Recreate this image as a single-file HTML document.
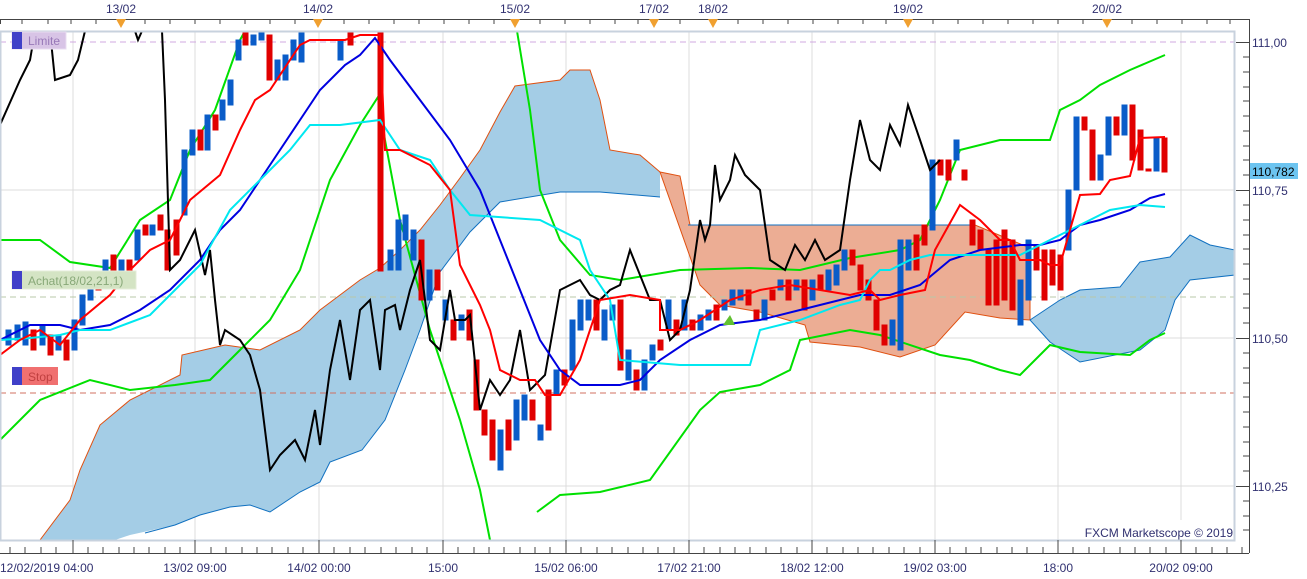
<!DOCTYPE html>
<html><head><meta charset="utf-8"><style>
html,body{margin:0;padding:0;background:#fff;width:1307px;height:579px;overflow:hidden}
svg{display:block;font-family:"Liberation Sans",sans-serif}
</style></head><body>
<svg width="1307" height="579" viewBox="0 0 1307 579" xmlns="http://www.w3.org/2000/svg">
<rect width="1307" height="579" fill="#fff"/>
<!-- grid -->
<g stroke="#dcdcdc" stroke-width="1">
<line x1="73" y1="31" x2="73" y2="540"/><line x1="195" y1="31" x2="195" y2="540"/><line x1="319" y1="31" x2="319" y2="540"/><line x1="443" y1="31" x2="443" y2="540"/><line x1="566" y1="31" x2="566" y2="540"/><line x1="689" y1="31" x2="689" y2="540"/><line x1="812" y1="31" x2="812" y2="540"/><line x1="935" y1="31" x2="935" y2="540"/><line x1="1058" y1="31" x2="1058" y2="540"/><line x1="1181" y1="31" x2="1181" y2="520"/>
<line x1="0" y1="190" x2="1235" y2="190"/><line x1="0" y1="338" x2="1235" y2="338"/><line x1="0" y1="486" x2="1235" y2="486"/>
</g>
<!-- clouds -->
<polygon fill="#a4cde6" points="40,540 70,500 80,470 100,425 130,400 180,375 182,355 225,345 260,350 300,330 320,310 360,280 380,268 400,250 420,230 440,205 460,178 480,150 500,112 515,86 560,80 570,70 590,70 600,100 610,150 640,155 660,172 660,197 600,192 560,192 500,202 470,232 440,272 420,330 405,370 385,420 362,450 330,462 320,482 300,492 270,512 250,505 230,507 200,515 175,525 130,535 115,540"/>
<polyline fill="none" stroke="#e05010" stroke-width="1" points="40,540 70,500 80,470 100,425 130,400 180,375 182,355 225,345 260,350 300,330 320,310 360,280 380,268 400,250 420,230 440,205 460,178 480,150 500,112 515,86 560,80 570,70 590,70 600,100 610,150 640,155 660,172"/>
<polyline fill="none" stroke="#1070c0" stroke-width="1" points="660,197 600,192 560,192 500,202 470,232 440,272 420,330 405,370 385,420 362,450 330,462 320,482 300,492 270,512 250,505 230,507 200,515 175,525 145,533"/>
<polygon fill="#ecad94" stroke="#e05010" stroke-width="1" points="660,172 680,176 690,225 975,225 1030,248 1030,320 1000,318 965,312 935,345 900,357 860,347 810,342 805,325 760,312 720,305 700,285"/>
<line x1="688" y1="225" x2="975" y2="225" stroke="#1070c0"/>
<polygon fill="#a4cde6" stroke="#1070c0" stroke-width="1" points="1030,320 1060,300 1080,290 1120,287 1140,262 1170,257 1190,235 1210,245 1235,250 1235,275 1190,280 1175,300 1165,330 1140,350 1080,362 1050,342"/>
<!-- dashed lines -->
<line x1="0" y1="42" x2="1235" y2="42" stroke="#d0a8e0" stroke-dasharray="6,4"/>
<line x1="0" y1="297" x2="1235" y2="297" stroke="#b8c8a8" stroke-dasharray="6,4"/>
<line x1="0" y1="393" x2="1235" y2="393" stroke="#d07060" stroke-dasharray="6,4"/>
<!-- green bands -->
<g fill="none" stroke="#00e000" stroke-width="2">
<polyline points="0,240 40,240 70,262 110,268 140,220 170,200 190,150 215,110 240,40 245,31"/>
<polyline points="0,440 40,400 90,380 130,390 175,385 210,380 240,350 270,320 300,270 330,180 360,125 378,97 385,140 400,220 430,330 460,420 480,490 490,540"/>
<polyline points="517,31 530,110 540,190 560,240 590,275 620,280 680,270 750,268 800,270 850,258 900,250 920,240 940,200 960,150 1000,140 1050,140 1060,110 1080,100 1100,85 1130,70 1165,55"/>
<polyline points="537,512 560,495 600,492 650,480 700,410 720,392 760,385 790,370 800,340 850,330 880,335 940,355 970,360 1000,370 1020,375 1050,345 1080,352 1130,355 1150,340 1165,333"/>
</g>
<!-- candles -->
<g id="c" stroke-width="1">
<g fill="#0a5cc8" stroke="#0a5cc8">
<rect x="6" y="330" width="5" height="15"/><rect x="15" y="325" width="5" height="15"/><rect x="23" y="322" width="5" height="23"/><rect x="40" y="325" width="5" height="20"/><rect x="56" y="335" width="5" height="15"/><rect x="72" y="320" width="5" height="30"/><rect x="80" y="295" width="5" height="30"/><rect x="88" y="285" width="5" height="15"/><rect x="103" y="260" width="5" height="20"/><rect x="119" y="260" width="5" height="10"/><rect x="135" y="230" width="5" height="30"/><rect x="150" y="225" width="5" height="10"/><rect x="182" y="150" width="5" height="65"/><rect x="190" y="130" width="5" height="25"/><rect x="205" y="115" width="5" height="35"/><rect x="220" y="100" width="5" height="20"/><rect x="228" y="80" width="5" height="25"/><rect x="236" y="40" width="5" height="20"/><rect x="251" y="35" width="5" height="10"/><rect x="259" y="31" width="5" height="9"/><rect x="275" y="60" width="5" height="20"/><rect x="283" y="55" width="5" height="25"/><rect x="291" y="40" width="5" height="20"/><rect x="299" y="31" width="5" height="31"/><rect x="338" y="40" width="5" height="20"/><rect x="388" y="250" width="5" height="20"/><rect x="396" y="220" width="5" height="50"/><rect x="403" y="215" width="5" height="25"/><rect x="411" y="230" width="5" height="30"/><rect x="427" y="270" width="5" height="30"/><rect x="443" y="300" width="5" height="20"/><rect x="459" y="315" width="5" height="15"/><rect x="498" y="430" width="5" height="40"/><rect x="514" y="400" width="5" height="40"/><rect x="522" y="395" width="5" height="25"/><rect x="538" y="425" width="5" height="15"/><rect x="554" y="370" width="5" height="25"/><rect x="570" y="320" width="5" height="50"/><rect x="578" y="300" width="5" height="30"/><rect x="586" y="300" width="5" height="20"/><rect x="602" y="310" width="5" height="30"/><rect x="610" y="305" width="5" height="15"/><rect x="626" y="350" width="5" height="30"/><rect x="642" y="360" width="5" height="30"/><rect x="650" y="345" width="5" height="15"/><rect x="666" y="300" width="5" height="30"/><rect x="682" y="300" width="5" height="30"/><rect x="698" y="315" width="5" height="15"/><rect x="706" y="310" width="5" height="10"/><rect x="722" y="300" width="5" height="10"/><rect x="730" y="290" width="5" height="15"/><rect x="738" y="290" width="5" height="10"/><rect x="762" y="300" width="5" height="20"/><rect x="778" y="280" width="5" height="10"/><rect x="794" y="280" width="5" height="10"/><rect x="810" y="280" width="5" height="20"/><rect x="826" y="270" width="5" height="20"/><rect x="834" y="265" width="5" height="20"/><rect x="842" y="250" width="5" height="20"/><rect x="890" y="320" width="5" height="25"/><rect x="898" y="240" width="5" height="110"/><rect x="906" y="240" width="5" height="30"/><rect x="930" y="160" width="5" height="70"/><rect x="954" y="140" width="5" height="20"/><rect x="1018" y="280" width="5" height="45"/><rect x="1026" y="240" width="5" height="60"/><rect x="1066" y="190" width="5" height="60"/><rect x="1074" y="117" width="5" height="73"/><rect x="1098" y="155" width="5" height="25"/><rect x="1106" y="117" width="5" height="38"/><rect x="1122" y="105" width="5" height="30"/><rect x="1154" y="138" width="5" height="33"/>
</g>
<g fill="#e00000" stroke="#e00000">
<rect x="31" y="330" width="5" height="20"/><rect x="48" y="335" width="5" height="20"/><rect x="64" y="340" width="5" height="20"/><rect x="96" y="275" width="5" height="15"/><rect x="111" y="255" width="5" height="20"/><rect x="127" y="260" width="5" height="10"/><rect x="143" y="225" width="5" height="10"/><rect x="158" y="215" width="5" height="15"/><rect x="165" y="230" width="5" height="40"/><rect x="174" y="220" width="5" height="35"/><rect x="198" y="130" width="5" height="20"/><rect x="213" y="115" width="5" height="15"/><rect x="243" y="31" width="5" height="14"/><rect x="267" y="35" width="5" height="45"/><rect x="348" y="31" width="5" height="14"/><rect x="378" y="31" width="5" height="240"/><rect x="419" y="240" width="5" height="60"/><rect x="435" y="270" width="5" height="20"/><rect x="451" y="320" width="5" height="20"/><rect x="467" y="310" width="5" height="30"/><rect x="474" y="360" width="5" height="50"/><rect x="482" y="410" width="5" height="25"/><rect x="490" y="420" width="5" height="40"/><rect x="506" y="420" width="5" height="30"/><rect x="530" y="400" width="5" height="20"/><rect x="546" y="390" width="5" height="40"/><rect x="562" y="370" width="5" height="15"/><rect x="594" y="300" width="5" height="30"/><rect x="618" y="300" width="5" height="70"/><rect x="634" y="370" width="5" height="20"/><rect x="658" y="340" width="5" height="10"/><rect x="674" y="320" width="5" height="15"/><rect x="690" y="320" width="5" height="10"/><rect x="714" y="305" width="5" height="15"/><rect x="746" y="290" width="5" height="15"/><rect x="754" y="310" width="5" height="10"/><rect x="770" y="290" width="5" height="10"/><rect x="786" y="280" width="5" height="20"/><rect x="802" y="280" width="5" height="30"/><rect x="818" y="275" width="5" height="15"/><rect x="850" y="250" width="5" height="15"/><rect x="858" y="265" width="5" height="25"/><rect x="866" y="280" width="5" height="20"/><rect x="874" y="300" width="5" height="30"/><rect x="882" y="325" width="5" height="20"/><rect x="914" y="235" width="5" height="35"/><rect x="922" y="225" width="5" height="20"/><rect x="938" y="160" width="5" height="15"/><rect x="946" y="160" width="5" height="20"/><rect x="962" y="170" width="5" height="10"/><rect x="970" y="220" width="5" height="25"/><rect x="978" y="230" width="5" height="20"/><rect x="986" y="250" width="5" height="55"/><rect x="994" y="240" width="5" height="65"/><rect x="1002" y="230" width="5" height="70"/><rect x="1010" y="240" width="5" height="70"/><rect x="1034" y="245" width="5" height="25"/><rect x="1042" y="250" width="5" height="50"/><rect x="1050" y="250" width="5" height="35"/><rect x="1058" y="255" width="5" height="35"/><rect x="1082" y="117" width="5" height="13"/><rect x="1090" y="130" width="5" height="50"/><rect x="1114" y="117" width="5" height="18"/><rect x="1130" y="105" width="5" height="55"/><rect x="1138" y="130" width="5" height="40"/><rect x="1146" y="169" width="5" height="2"/><rect x="1162" y="138" width="5" height="34"/>
</g>
</g>
<!-- black chikou -->
<polyline fill="none" stroke="#000" stroke-width="2" points="0,125 20,80 30,60 35,31"/>
<polyline fill="none" stroke="#000" stroke-width="2" points="50,31 55,80 70,75 78,60 85,31"/>
<polyline fill="none" stroke="#000" stroke-width="2" points="135,31 138,40 142,31"/>
<polyline fill="none" stroke="#000" stroke-width="2" points="162,31 165,100 170,270 180,260 195,230 205,275 210,250 215,300 220,345 225,330 240,340 250,355 260,390 270,470 280,455 295,440 305,460 315,410 320,445 330,370 340,320 350,380 360,310 370,300 380,370 385,310 395,305 400,330 410,290 420,260 430,340 440,350 450,290 455,320 465,320 470,315 480,410 490,380 500,395 510,380 520,330 530,390 545,375 560,290 570,285 580,280 590,295 600,300 610,290 620,285 630,250 640,275 650,300 660,300 670,340 680,330 690,290 700,220 705,240 710,225 715,165 720,200 730,180 735,155 745,175 760,190 770,260 785,270 795,245 805,260 815,240 825,260 840,250 850,180 860,120 870,160 880,170 890,125 900,145 908,105 920,140 930,170 940,160"/>
<!-- kijun blue -->
<polyline fill="none" stroke="#0000e0" stroke-width="2" points="0,340 30,325 60,325 80,330 110,325 140,310 170,290 200,260 220,230 240,210 260,180 280,150 300,120 320,90 345,65 360,55 375,38 390,60 420,100 450,140 480,190 500,240 520,290 540,340 560,370 580,385 620,385 640,380 660,360 690,340 720,325 760,320 800,310 820,305 860,295 890,295 920,285 950,260 980,250 1020,245 1040,245 1060,240 1080,225 1100,220 1130,210 1150,198 1165,194"/>
<!-- cyan -->
<polyline fill="none" stroke="#00e8f0" stroke-width="2" points="0,340 30,338 60,335 80,330 110,330 150,315 180,285 200,265 230,210 260,180 290,150 310,125 340,125 380,120 400,150 430,160 450,190 470,215 540,220 580,240 590,270 610,300 620,360 680,365 750,365 760,330 800,320 840,305 860,300 870,280 880,270 890,270 910,260 930,255 960,255 1020,255 1040,245 1070,230 1110,210 1140,205 1165,207"/>
<!-- tenkan red -->
<polyline fill="none" stroke="#ff0000" stroke-width="2" points="0,355 20,340 40,330 60,345 80,320 110,295 130,270 150,250 170,240 190,200 220,175 240,130 255,100 270,90 300,45 310,40 345,40 360,35 380,35 385,150 400,150 430,165 450,190 460,265 480,305 490,330 500,370 520,380 535,380 545,395 560,395 580,360 600,300 630,295 660,300 660,330 680,330 700,320 730,300 760,290 790,285 820,290 850,295 870,290 880,300 900,295 925,290 935,250 960,205 980,220 990,230 1000,240 1010,240 1020,260 1040,260 1050,265 1060,265 1070,230 1080,195 1100,194 1110,180 1130,176 1140,138 1165,137"/>
<polygon points="723,325 730,315 735,325" fill="#60c030"/>
<!-- plot frame -->
<rect x="0.5" y="31.5" width="1234" height="509" fill="none" stroke="#c8d2de" stroke-width="2"/>
<!-- labels -->
<rect x="12" y="32" width="54" height="17" fill="#d8c4e6" stroke="#e8dcf0"/>
<rect x="12" y="32" width="10" height="17" fill="#4040c8"/>
<text x="28" y="45" font-size="12" fill="#9878b8">Limite</text>
<rect x="12" y="271" width="124" height="18" fill="#d4e4c4" stroke="#e4ecd8"/>
<rect x="12" y="271" width="10" height="18" fill="#4040c8"/>
<text x="28" y="285" font-size="12" fill="#88a878">Achat(18/02,21,1)</text>
<rect x="12" y="367" width="46" height="18" fill="#f07070"/>
<rect x="12" y="367" width="10" height="18" fill="#4040c8"/>
<text x="28" y="381" font-size="12" fill="#c04040">Stop</text>
<text x="1233" y="537" font-size="12" fill="#303070" text-anchor="end">FXCM Marketscope © 2019</text>
<!-- top axis -->
<line x1="0" y1="19.5" x2="1249" y2="19.5" stroke="#444"/>
<line x1="1249.5" y1="19" x2="1249.5" y2="553" stroke="#444"/>
<g stroke="#444">
<line x1="0.5" y1="19" x2="0.5" y2="24"/><line x1="22" y1="19" x2="22" y2="24"/><line x1="48" y1="19" x2="48" y2="24"/><line x1="71" y1="19" x2="71" y2="24"/><line x1="96" y1="19" x2="96" y2="24"/><line x1="145" y1="19" x2="145" y2="24"/><line x1="170" y1="19" x2="170" y2="24"/><line x1="195" y1="19" x2="195" y2="24"/><line x1="220" y1="19" x2="220" y2="24"/><line x1="245" y1="19" x2="245" y2="24"/><line x1="270" y1="19" x2="270" y2="24"/><line x1="295" y1="19" x2="295" y2="24"/><line x1="344" y1="19" x2="344" y2="24"/><line x1="369" y1="19" x2="369" y2="24"/><line x1="394" y1="19" x2="394" y2="24"/><line x1="419" y1="19" x2="419" y2="24"/><line x1="444" y1="19" x2="444" y2="24"/><line x1="469" y1="19" x2="469" y2="24"/><line x1="494" y1="19" x2="494" y2="24"/><line x1="540" y1="19" x2="540" y2="24"/><line x1="565" y1="19" x2="565" y2="24"/><line x1="590" y1="19" x2="590" y2="24"/><line x1="615" y1="19" x2="615" y2="24"/><line x1="638" y1="19" x2="638" y2="24"/><line x1="680" y1="19" x2="680" y2="24"/><line x1="738" y1="19" x2="738" y2="24"/><line x1="763" y1="19" x2="763" y2="24"/><line x1="788" y1="19" x2="788" y2="24"/><line x1="813" y1="19" x2="813" y2="24"/><line x1="838" y1="19" x2="838" y2="24"/><line x1="863" y1="19" x2="863" y2="24"/><line x1="886" y1="19" x2="886" y2="24"/><line x1="933" y1="19" x2="933" y2="24"/><line x1="958" y1="19" x2="958" y2="24"/><line x1="983" y1="19" x2="983" y2="24"/><line x1="1008" y1="19" x2="1008" y2="24"/><line x1="1033" y1="19" x2="1033" y2="24"/><line x1="1058" y1="19" x2="1058" y2="24"/><line x1="1083" y1="19" x2="1083" y2="24"/><line x1="1132" y1="19" x2="1132" y2="24"/><line x1="1157" y1="19" x2="1157" y2="24"/><line x1="1182" y1="19" x2="1182" y2="24"/><line x1="1207" y1="19" x2="1207" y2="24"/><line x1="1230" y1="19" x2="1230" y2="24"/>
</g>
<g fill="#f0a030">
<polygon points="116,19 126,19 121,28"/><polygon points="313,19 323,19 318,28"/><polygon points="510,19 520,19 515,28"/><polygon points="649,19 659,19 654,28"/><polygon points="708,19 718,19 713,28"/><polygon points="903,19 913,19 908,28"/><polygon points="1102,19 1112,19 1107,28"/>
</g>
<g font-size="12" fill="#303070" text-anchor="middle">
<text x="121" y="13">13/02</text><text x="318" y="13">14/02</text><text x="515" y="13">15/02</text><text x="654" y="13">17/02</text><text x="713" y="13">18/02</text><text x="908" y="13">19/02</text><text x="1107" y="13">20/02</text>
</g>
<!-- right axis -->
<g stroke="#444">
<line x1="1236" y1="42.5" x2="1249" y2="42.5"/><line x1="1236" y1="190.5" x2="1249" y2="190.5"/><line x1="1236" y1="338.5" x2="1249" y2="338.5"/><line x1="1236" y1="486.5" x2="1249" y2="486.5"/>
<line x1="1243" y1="57" x2="1249" y2="57"/><line x1="1243" y1="72" x2="1249" y2="72"/><line x1="1243" y1="87" x2="1249" y2="87"/><line x1="1243" y1="101" x2="1249" y2="101"/><line x1="1243" y1="116" x2="1249" y2="116"/><line x1="1243" y1="131" x2="1249" y2="131"/><line x1="1243" y1="146" x2="1249" y2="146"/><line x1="1243" y1="160" x2="1249" y2="160"/><line x1="1243" y1="175" x2="1249" y2="175"/>
<line x1="1243" y1="205" x2="1249" y2="205"/><line x1="1243" y1="220" x2="1249" y2="220"/><line x1="1243" y1="235" x2="1249" y2="235"/><line x1="1243" y1="249" x2="1249" y2="249"/><line x1="1243" y1="264" x2="1249" y2="264"/><line x1="1243" y1="279" x2="1249" y2="279"/><line x1="1243" y1="294" x2="1249" y2="294"/><line x1="1243" y1="308" x2="1249" y2="308"/><line x1="1243" y1="323" x2="1249" y2="323"/>
<line x1="1243" y1="353" x2="1249" y2="353"/><line x1="1243" y1="368" x2="1249" y2="368"/><line x1="1243" y1="383" x2="1249" y2="383"/><line x1="1243" y1="397" x2="1249" y2="397"/><line x1="1243" y1="412" x2="1249" y2="412"/><line x1="1243" y1="427" x2="1249" y2="427"/><line x1="1243" y1="442" x2="1249" y2="442"/><line x1="1243" y1="456" x2="1249" y2="456"/><line x1="1243" y1="471" x2="1249" y2="471"/>
<line x1="1243" y1="501" x2="1249" y2="501"/><line x1="1243" y1="516" x2="1249" y2="516"/><line x1="1243" y1="530" x2="1249" y2="530"/>
</g>
<g font-size="12" fill="#303070">
<text x="1252" y="47">111,00</text><text x="1252" y="195">110,75</text><text x="1252" y="343">110,50</text><text x="1252" y="491">110,25</text>
</g>
<rect x="1250" y="163" width="48" height="16" fill="#6cc4f0"/>
<text x="1252" y="176" font-size="12" fill="#000">110,782</text>
<!-- bottom axis -->
<line x1="0" y1="553.5" x2="1249" y2="553.5" stroke="#444"/>
<g stroke="#444">
<line x1="73" y1="540" x2="73" y2="553"/><line x1="195" y1="540" x2="195" y2="553"/><line x1="319" y1="540" x2="319" y2="553"/><line x1="443" y1="540" x2="443" y2="553"/><line x1="566" y1="540" x2="566" y2="553"/><line x1="689" y1="540" x2="689" y2="553"/><line x1="812" y1="540" x2="812" y2="553"/><line x1="935" y1="540" x2="935" y2="553"/><line x1="1058" y1="540" x2="1058" y2="553"/><line x1="1181" y1="540" x2="1181" y2="553"/>
</g>
<g stroke="#444" stroke-dasharray="1,14.4">
<line x1="10" y1="549.5" x2="1245" y2="549.5" stroke-width="1" style="stroke-dasharray:none;stroke:none"/>
</g>
<path stroke="#444" d="M10 547V553M25 547V553M41 547V553M56 547V553M88 547V553M103 547V553M119 547V553M134 547V553M149 547V553M165 547V553M180 547V553M211 547V553M226 547V553M242 547V553M257 547V553M272 547V553M288 547V553M303 547V553M334 547V553M350 547V553M365 547V553M381 547V553M396 547V553M412 547V553M427 547V553M458 547V553M474 547V553M489 547V553M504 547V553M520 547V553M535 547V553M550 547V553M581 547V553M597 547V553M612 547V553M628 547V553M643 547V553M658 547V553M674 547V553M704 547V553M720 547V553M735 547V553M750 547V553M766 547V553M781 547V553M797 547V553M827 547V553M843 547V553M858 547V553M873 547V553M889 547V553M904 547V553M920 547V553M950 547V553M966 547V553M981 547V553M997 547V553M1012 547V553M1027 547V553M1043 547V553M1073 547V553M1089 547V553M1104 547V553M1120 547V553M1135 547V553M1150 547V553M1166 547V553M1196 547V553M1212 547V553M1227 547V553M1242 547V553"/>
<g font-size="12" fill="#303070" text-anchor="middle">
<text x="0" y="572" text-anchor="start">12/02/2019 04:00</text>
<text x="195" y="572">13/02 09:00</text><text x="319" y="572">14/02 00:00</text><text x="443" y="572">15:00</text><text x="566" y="572">15/02 06:00</text><text x="689" y="572">17/02 21:00</text><text x="812" y="572">18/02 12:00</text><text x="935" y="572">19/02 03:00</text><text x="1058" y="572">18:00</text><text x="1181" y="572">20/02 09:00</text>
</g>
</svg>
</body></html>
